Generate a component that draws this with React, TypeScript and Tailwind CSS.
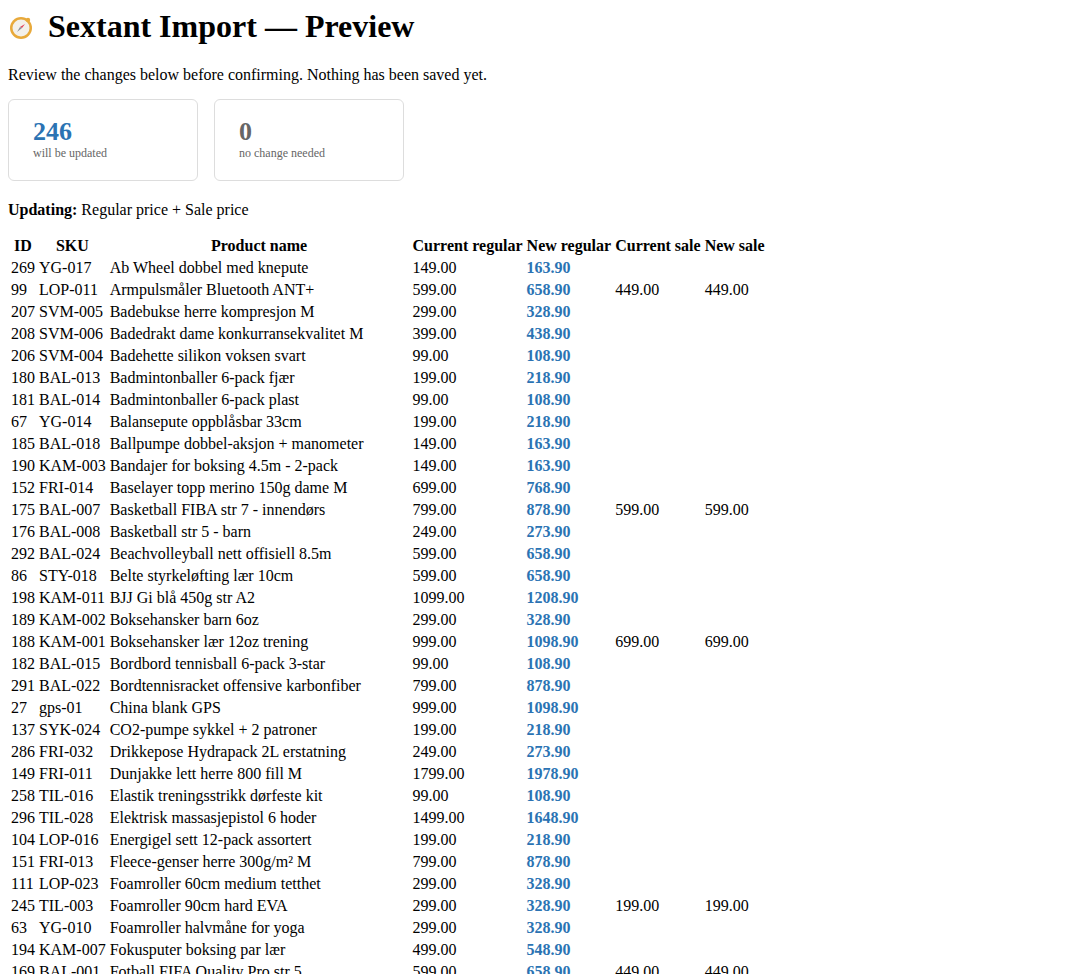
const rows: [string, string, string, string, string, string?, string?][] = [
  ["269", "YG-017", "Ab Wheel dobbel med knepute", "149.00", "163.90"],
  ["99", "LOP-011", "Armpulsmåler Bluetooth ANT+", "599.00", "658.90", "449.00", "449.00"],
  ["207", "SVM-005", "Badebukse herre kompresjon M", "299.00", "328.90"],
  ["208", "SVM-006", "Badedrakt dame konkurransekvalitet M", "399.00", "438.90"],
  ["206", "SVM-004", "Badehette silikon voksen svart", "99.00", "108.90"],
  ["180", "BAL-013", "Badmintonballer 6-pack fjær", "199.00", "218.90"],
  ["181", "BAL-014", "Badmintonballer 6-pack plast", "99.00", "108.90"],
  ["67", "YG-014", "Balansepute oppblåsbar 33cm", "199.00", "218.90"],
  ["185", "BAL-018", "Ballpumpe dobbel-aksjon + manometer", "149.00", "163.90"],
  ["190", "KAM-003", "Bandajer for boksing 4.5m - 2-pack", "149.00", "163.90"],
  ["152", "FRI-014", "Baselayer topp merino 150g dame M", "699.00", "768.90"],
  ["175", "BAL-007", "Basketball FIBA str 7 - innendørs", "799.00", "878.90", "599.00", "599.00"],
  ["176", "BAL-008", "Basketball str 5 - barn", "249.00", "273.90"],
  ["292", "BAL-024", "Beachvolleyball nett offisiell 8.5m", "599.00", "658.90"],
  ["86", "STY-018", "Belte styrkeløfting lær 10cm", "599.00", "658.90"],
  ["198", "KAM-011", "BJJ Gi blå 450g str A2", "1099.00", "1208.90"],
  ["189", "KAM-002", "Boksehansker barn 6oz", "299.00", "328.90"],
  ["188", "KAM-001", "Boksehansker lær 12oz trening", "999.00", "1098.90", "699.00", "699.00"],
  ["182", "BAL-015", "Bordbord tennisball 6-pack 3-star", "99.00", "108.90"],
  ["291", "BAL-022", "Bordtennisracket offensive karbonfiber", "799.00", "878.90"],
  ["27", "gps-01", "China blank GPS", "999.00", "1098.90"],
  ["137", "SYK-024", "CO2-pumpe sykkel + 2 patroner", "199.00", "218.90"],
  ["286", "FRI-032", "Drikkepose Hydrapack 2L erstatning", "249.00", "273.90"],
  ["149", "FRI-011", "Dunjakke lett herre 800 fill M", "1799.00", "1978.90"],
  ["258", "TIL-016", "Elastik treningsstrikk dørfeste kit", "99.00", "108.90"],
  ["296", "TIL-028", "Elektrisk massasjepistol 6 hoder", "1499.00", "1648.90"],
  ["104", "LOP-016", "Energigel sett 12-pack assortert", "199.00", "218.90"],
  ["151", "FRI-013", "Fleece-genser herre 300g/m² M", "799.00", "878.90"],
  ["111", "LOP-023", "Foamroller 60cm medium tetthet", "299.00", "328.90"],
  ["245", "TIL-003", "Foamroller 90cm hard EVA", "299.00", "328.90", "199.00", "199.00"],
  ["63", "YG-010", "Foamroller halvmåne for yoga", "299.00", "328.90"],
  ["194", "KAM-007", "Fokusputer boksing par lær", "499.00", "548.90"],
  ["169", "BAL-001", "Fotball FIFA Quality Pro str 5", "599.00", "658.90", "449.00", "449.00"],
];

function Compass() {
  return (
    <svg width="26" height="26" viewBox="0 0 26 26">
      <circle cx="13" cy="14" r="11" fill="#e8a93a" />
      <circle cx="13" cy="14" r="8.5" fill="#f3f0ea" />
      <circle cx="20" cy="6" r="2.2" fill="#e8a93a" />
      <path d="M17 10 L14 14 L12 13 Z" fill="#e0405a" />
      <path d="M9 18 L12 13 L14 14 Z" fill="#8a8f99" />
    </svg>
  );
}

export default function App() {
  return (
    <div className="p-2 text-black bg-white min-h-screen" style={{ fontFamily: '"Liberation Serif", serif' }}>
      <h1 className="flex items-center gap-3.5 text-[32px] font-bold mb-[21px] leading-[37px]">
        <Compass />
        Sextant Import — Preview
      </h1>
      <p className="text-base leading-[18px] mb-[15px]">
        Review the changes below before confirming. Nothing has been saved yet.
      </p>
      <div className="flex gap-4 mb-[20px]">
        <div className="w-[190px] h-[82px] border border-[#dddddd] rounded-md pl-6 pt-[18px]">
          <div className="text-[26px] font-bold leading-[28px] text-[#2b73b3]">246</div>
          <div className="text-xs text-[#666666] leading-[14px]">will be updated</div>
        </div>
        <div className="w-[190px] h-[82px] border border-[#dddddd] rounded-md pl-6 pt-[18px]">
          <div className="text-[26px] font-bold leading-[28px] text-[#666666]">0</div>
          <div className="text-xs text-[#666666] leading-[14px]">no change needed</div>
        </div>
      </div>
      <p className="text-base leading-[18px] mb-[15px]">
        <b>Updating:</b> Regular price + Sale price
      </p>
      <table className="border-separate border-spacing-[2px] text-base leading-[18px]">
        <thead>
          <tr>
            {["ID", "SKU", "Product name", "Current regular", "New regular", "Current sale", "New sale"].map((h) => (
              <th key={h} className="p-px font-bold text-center">{h}</th>
            ))}
          </tr>
        </thead>
        <tbody>
          {rows.map((r) => (
            <tr key={r[0]}>
              <td className="p-px">{r[0]}</td>
              <td className="p-px">{r[1]}</td>
              <td className="p-px pr-[46px]">{r[2]}</td>
              <td className="p-px">{r[3]}</td>
              <td className="p-px font-bold text-[#2b73b3]">{r[4]}</td>
              <td className="p-px">{r[5] ?? ""}</td>
              <td className="p-px">{r[6] ?? ""}</td>
            </tr>
          ))}
        </tbody>
      </table>
    </div>
  );
}
